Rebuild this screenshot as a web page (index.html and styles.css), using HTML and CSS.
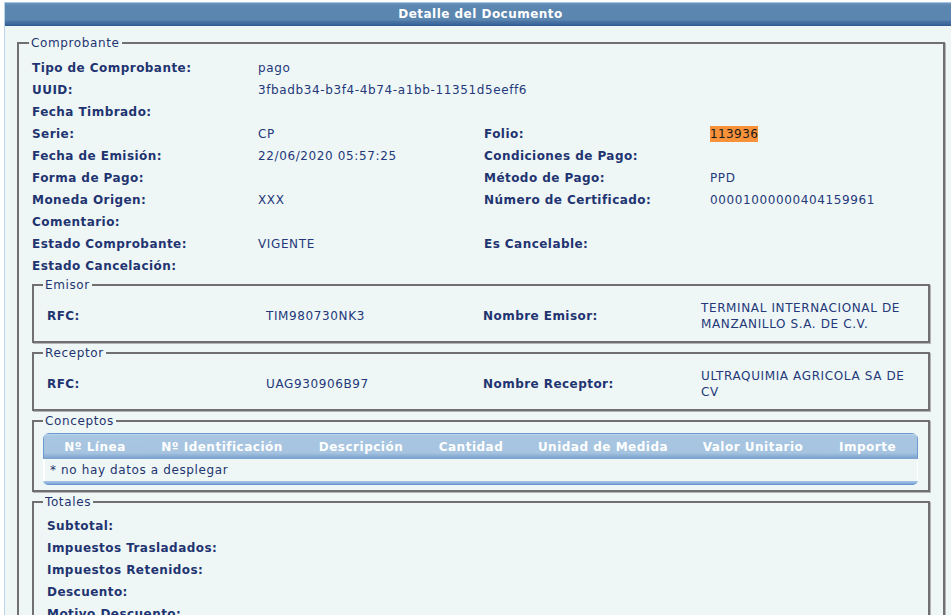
FILE: index.html
```html
<!DOCTYPE html>
<html lang="es">
<head>
<meta charset="utf-8">
<title>Detalle del Documento</title>
<link rel="stylesheet" href="styles.css">
</head>
<body>
<div class="panel">
  <div class="titlebar">Detalle del Documento</div>
  <div class="panel-body">
    <fieldset class="fs fs-main">
      <legend>Comprobante</legend>
      <div class="grid grid-main">
        <div class="lbl">Tipo de Comprobante:</div><div class="val">pago</div><div></div><div></div>
        <div class="lbl">UUID:</div><div class="val span3">3fbadb34-b3f4-4b74-a1bb-11351d5eeff6</div>
        <div class="lbl">Fecha Timbrado:</div><div class="val"></div><div></div><div></div>
        <div class="lbl">Serie:</div><div class="val">CP</div><div class="lbl">Folio:</div><div class="val"><span class="hl">113936</span></div>
        <div class="lbl">Fecha de Emisión:</div><div class="val">22/06/2020 05:57:25</div><div class="lbl">Condiciones de Pago:</div><div class="val"></div>
        <div class="lbl">Forma de Pago:</div><div class="val"></div><div class="lbl">Método de Pago:</div><div class="val">PPD</div>
        <div class="lbl">Moneda Origen:</div><div class="val">XXX</div><div class="lbl">Número de Certificado:</div><div class="val">00001000000404159961</div>
        <div class="lbl">Comentario:</div><div class="val"></div><div></div><div></div>
        <div class="lbl">Estado Comprobante:</div><div class="val">VIGENTE</div><div class="lbl">Es Cancelable:</div><div class="val"></div>
        <div class="lbl">Estado Cancelación:</div><div class="val"></div><div></div><div></div>
      </div>

      <fieldset class="fs fs-sub">
        <legend>Emisor</legend>
        <div class="grid grid-party">
          <div class="lbl">RFC:</div><div class="val">TIM980730NK3</div>
          <div class="lbl">Nombre Emisor:</div><div class="val wrap">TERMINAL INTERNACIONAL DE MANZANILLO S.A. DE C.V.</div>
        </div>
      </fieldset>

      <fieldset class="fs fs-sub">
        <legend>Receptor</legend>
        <div class="grid grid-party">
          <div class="lbl">RFC:</div><div class="val">UAG930906B97</div>
          <div class="lbl">Nombre Receptor:</div><div class="val wrap">ULTRAQUIMIA AGRICOLA SA DE CV</div>
        </div>
      </fieldset>

      <fieldset class="fs fs-sub fs-concepts">
        <legend>Conceptos</legend>
        <div class="dgrid">
          <table class="dtable">
            <thead>
              <tr>
                <th class="c1">Nº Línea</th>
                <th class="c2">Nº Identificación</th>
                <th class="c3">Descripción</th>
                <th class="c4">Cantidad</th>
                <th class="c5">Unidad de Medida</th>
                <th class="c6">Valor Unitario</th>
                <th class="c7">Importe</th>
              </tr>
            </thead>
            <tbody>
              <tr><td colspan="7" class="empty">* no hay datos a desplegar</td></tr>
            </tbody>
          </table>
          <div class="dgrid-foot"></div>
        </div>
      </fieldset>

      <fieldset class="fs fs-sub fs-totals">
        <legend>Totales</legend>
        <div class="grid grid-totals">
          <div class="lbl">Subtotal:</div>
          <div class="lbl">Impuestos Trasladados:</div>
          <div class="lbl">Impuestos Retenidos:</div>
          <div class="lbl">Descuento:</div>
          <div class="lbl">Motivo Descuento:</div>
          <div class="lbl">Total:</div>
        </div>
      </fieldset>
    </fieldset>
  </div>
</div>
</body>
</html>
```

FILE: styles.css
```css
html, body {
  margin: 0;
  padding: 0;
  overflow: hidden;
  background: #ffffff;
}

body {
  font-family: "DejaVu Sans", Verdana, sans-serif;
  font-size: 12px;
  letter-spacing: 0.62px;
  color: #1f3470;
}

.panel {
  margin: 2px 0 0 4px;
  width: 951px;
  border-left: 1px solid #bcd3ea;
  background: #eef7f6;
  min-height: 640px;
}

.titlebar {
  height: 24px;
  line-height: 25px;
  text-align: center;
  color: #ffffff;
  font-weight: bold;
  font-size: 12px;
  letter-spacing: 0.48px;
  background: linear-gradient(#a6c3e6 0, #a6c3e6 1px, #6a93bd 1px, #5b86b0 4px, #5b86b0 18px, #4d77a7 19px, #3e679c 22px, #2e5890 24px);
}

.panel-body {
  padding: 10px 11px 0 12px;
}

.fs {
  margin: 0;
  padding: 0;
  border: 2px solid #707070;
  box-shadow: 1px 1px 0 #b4b4b4;
  min-width: 0;
}

.fs legend {
  margin-left: -4px;
  padding: 0 2px;
  line-height: 14px;
  font-size: 12px;
  color: #1f3470;
}

.fs-main > legend {
  margin-left: -3px;
}

.fs-main {
  padding: 7px 13px 0 13px;
}

.fs-sub {
  margin-top: 3px;
  padding: 8px 13px 9px 13px;
}

.fs-main > .grid-main + .fs-sub {
  margin-top: 1px;
}

.grid {
  display: grid;
  align-items: center;
}

.grid-main {
  grid-template-columns: 226px 226px 226px 1fr;
  grid-auto-rows: 22px;
}

.span3 {
  grid-column: span 3;
}

.grid-party {
  grid-template-columns: 219px 217px 218px 1fr;
  line-height: 16px;
}

.lbl {
  font-weight: bold;
  letter-spacing: 0.45px;
  color: #1f3470;
  white-space: nowrap;
}

.val {
  color: #24387a;
  white-space: nowrap;
}

.val.wrap {
  white-space: normal;
}

.hl {
  background: #f8923a;
  color: #1a1a1a;
  padding: 1px 0;
  letter-spacing: 0.4px;
}

.fs-concepts {
  padding: 5px 10px 5px 9px;
}

.fs-concepts > legend {
  margin-left: 0;
}

.dgrid {
  border-radius: 6px 6px 5px 5px;
  overflow: hidden;
}

.dtable {
  width: 100%;
  border-collapse: collapse;
  table-layout: fixed;
}

.dtable th {
  height: 25px;
  padding: 1px 0 0;
  font-weight: bold;
  letter-spacing: 0.5px;
  color: #ffffff;
  text-align: center;
  white-space: nowrap;
  background: linear-gradient(#6f99d1 0, #6f99d1 1px, #bcd4ea 1px, #a8c6e1 3px, #a6c4df 20px, #93b5d8 22px, #7ea5d0 25px);
}

.dtable th.c1 { width: 102px; border-left: 1px solid #6f99d1; }
.dtable th.c2 { width: 152px; }
.dtable th.c3 { width: 126px; }
.dtable th.c4 { width: 94px; }
.dtable th.c5 { width: 170px; }
.dtable th.c6 { width: 130px; }
.dtable th.c7 { border-right: 1px solid #6f99d1; }

.dtable td.empty {
  height: 22px;
  padding: 0 0 0 6px;
  color: #1f3470;
  border-left: 1px solid #ffffff;
  border-right: 1px solid #ffffff;
  box-shadow: inset 1px 0 0 #ffffff;
}

.dtable tbody tr {
  background: #eef7f6;
}

.dgrid-foot {
  height: 4px;
  background: linear-gradient(#a8c6e4 0, #90b3dc 2px, #5e8fd2 4px);
  border-radius: 0 0 5px 5px;
}

.fs-totals {
  padding: 6px 13px 0 13px;
}

.grid-totals {
  grid-template-columns: 1fr;
  grid-auto-rows: 22px;
}
```
